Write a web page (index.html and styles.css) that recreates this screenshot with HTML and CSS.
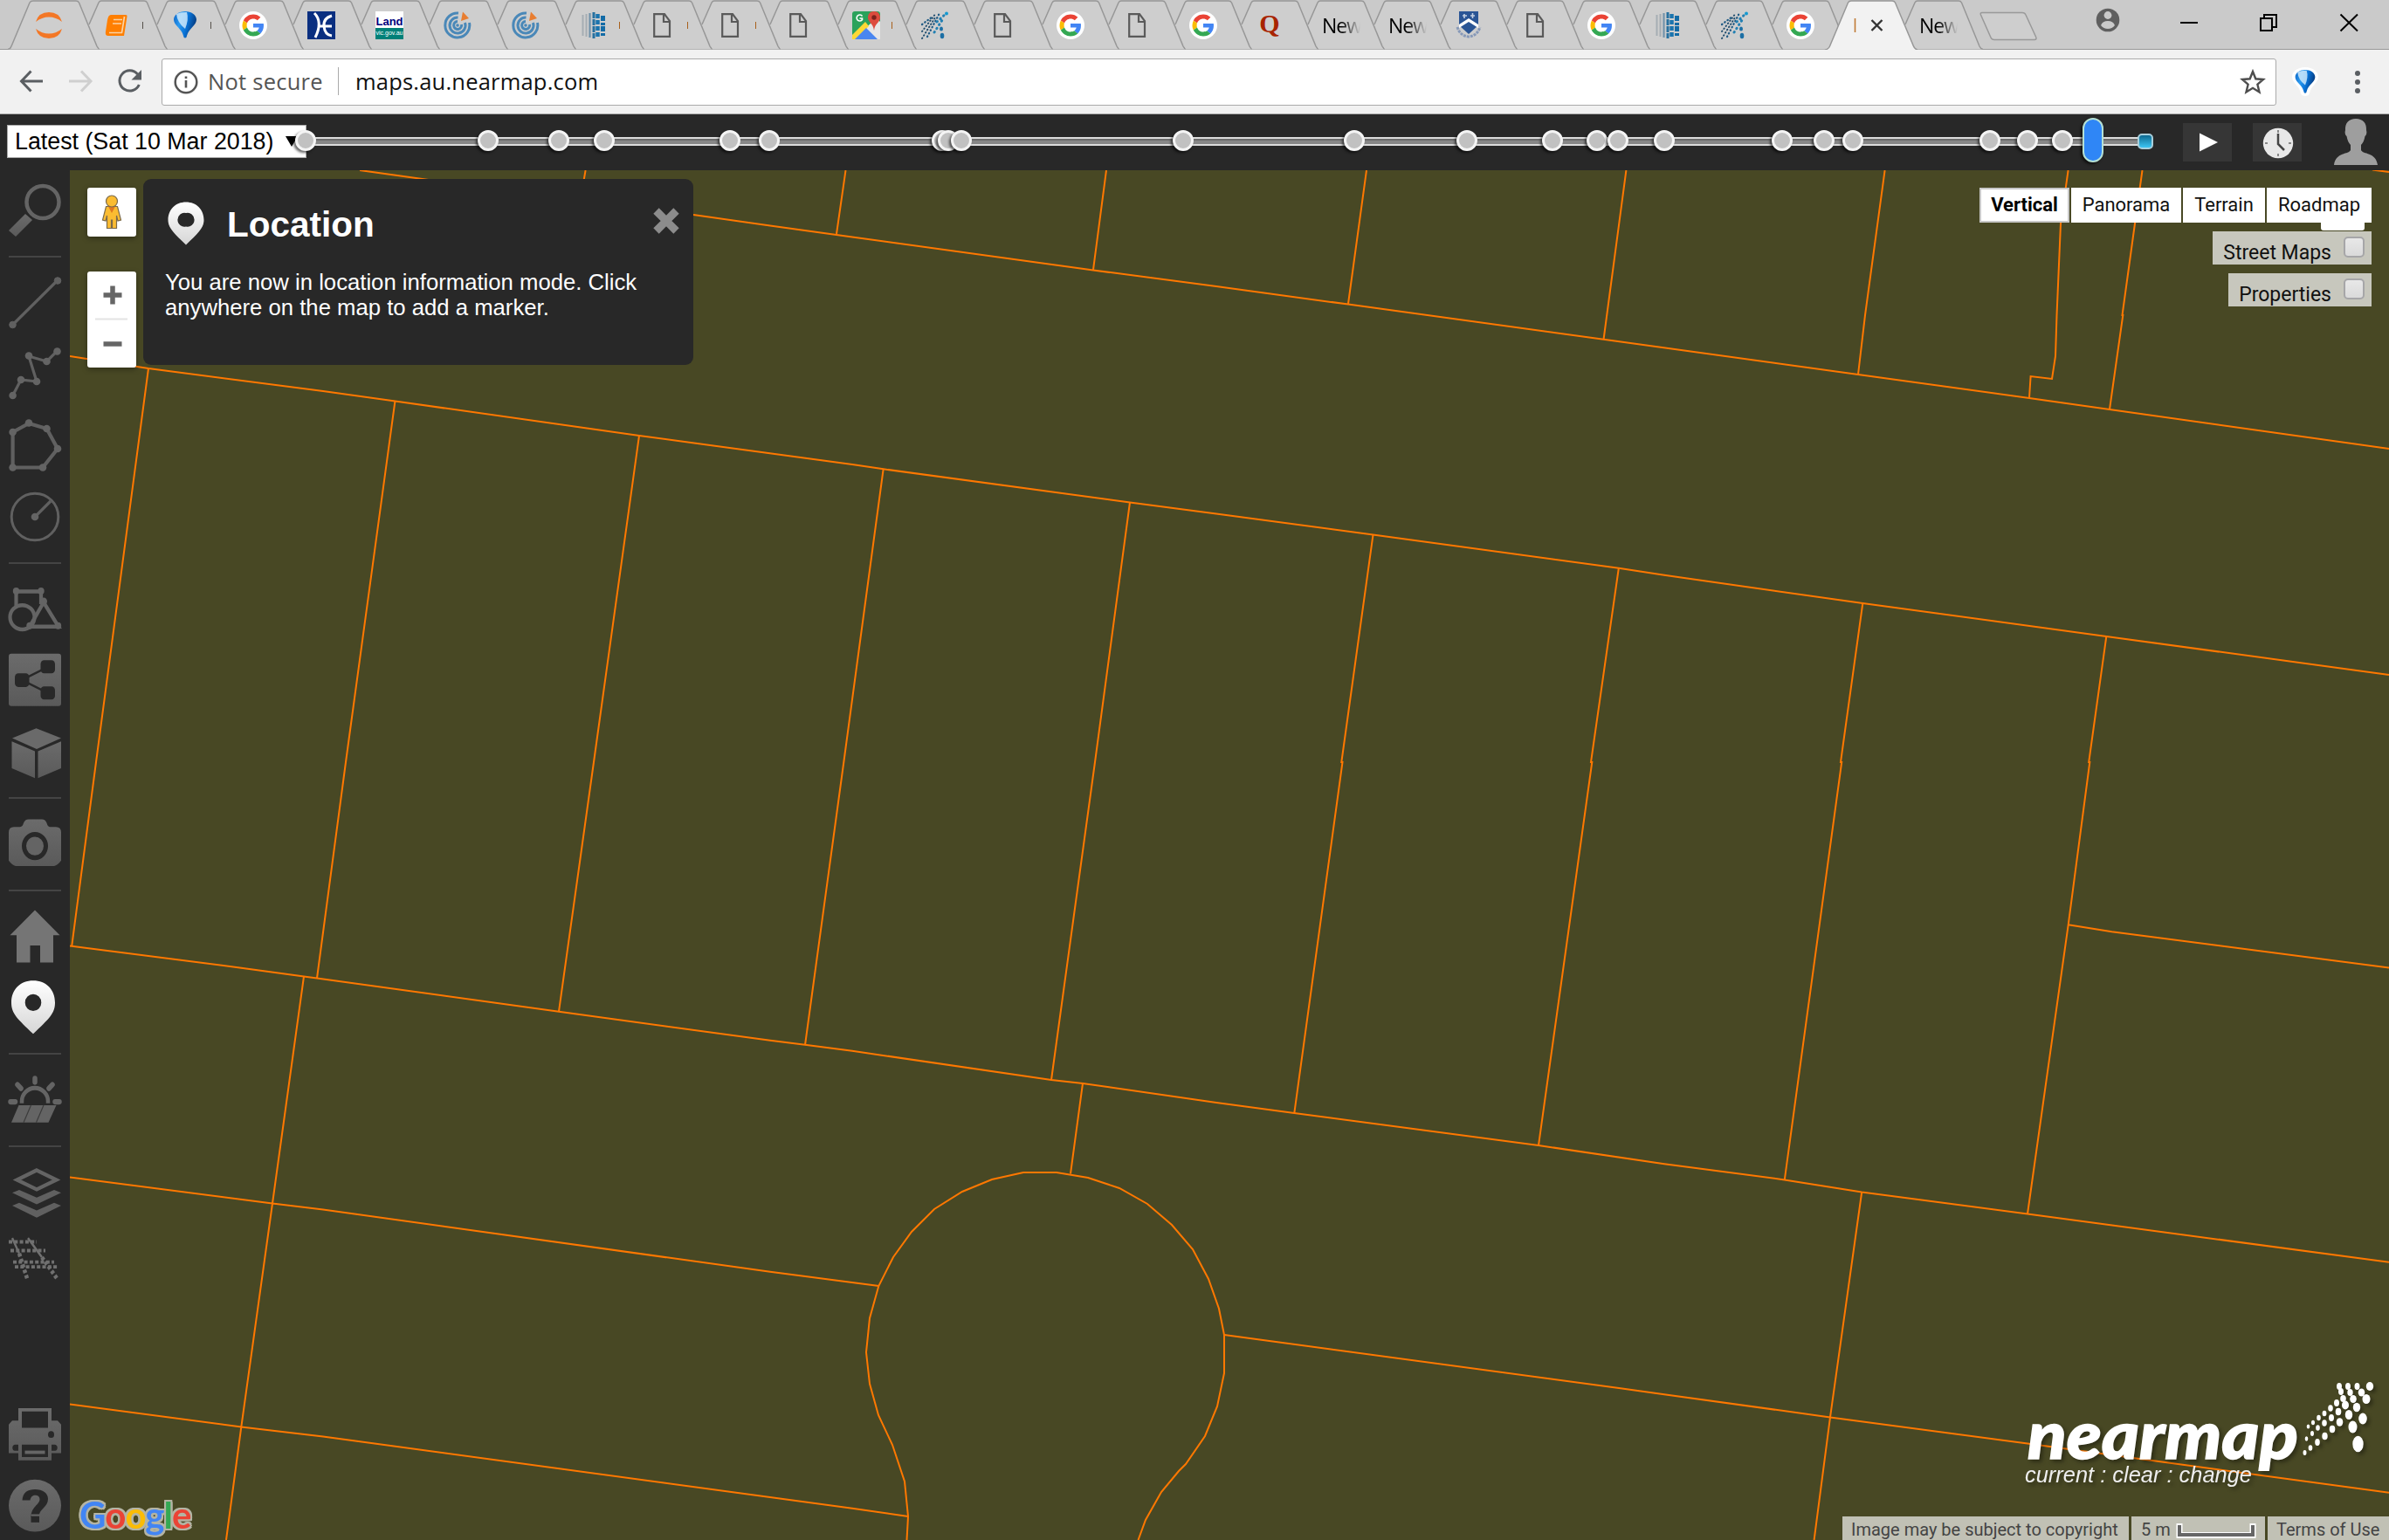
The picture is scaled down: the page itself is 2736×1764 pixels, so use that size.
FILE: index.html
```html
<!DOCTYPE html>
<html lang="en">
<head>
<meta charset="utf-8">
<title>Maps</title>
<link rel="stylesheet" href="styles.css">
</head>
<body>
<svg class="defs" width="0" height="0">
  <defs>
    <linearGradient id="grey" x1="0" y1="0" x2="0" y2="1"><stop offset="0" stop-color="#6b6b6b"/><stop offset="1" stop-color="#5a5a5a"/></linearGradient>
    <linearGradient id="white" x1="0" y1="0" x2="0" y2="1"><stop offset="0" stop-color="#fff"/><stop offset="1" stop-color="#d6d6d6"/></linearGradient>
    <linearGradient id="blue" x1="0" y1="0" x2="1" y2="0.3"><stop offset="0" stop-color="#0b62c4"/><stop offset=".35" stop-color="#2b9af0"/><stop offset=".65" stop-color="#0a74d8"/><stop offset="1" stop-color="#053f85"/></linearGradient>
    <symbol id="tab" viewBox="0 0 122 57"><path d="M28 28L40 2Q40.500 1 42 1H92Q93.500 1 94 2.500L116 54Q117 56 119 56.500H40Z" fill="#cecece"/><path d="M28 28L39 3Q40 1 42 1H91Q93.500 1 94.500 3L115 53Q116.500 56 119 56.500" fill="none" stroke="#979797" stroke-width="1.500"/></symbol>
    <symbol id="tabs" viewBox="0 0 122 57"><path d="M28 28L40 2Q40.500 1 42 1H90Q91.500 1 92 2.500L114 54Q115 56 117 56.500H40Z" fill="#cecece"/><path d="M28 28L39 3Q40 1 42 1H89Q91.500 1 92.500 3L113 53Q114.500 56 117 56.500" fill="none" stroke="#979797" stroke-width="1.500"/></symbol>
    <symbol id="tabfirst" viewBox="0 0 122 57"><path d="M13 56.500Q16 56 17 53L38 3Q39 1 42 1H91Q93.500 1 94.500 3L115 53Q116.500 56 119 56.500" fill="#cecece" stroke="#979797" stroke-width="1.500"/></symbol>
    <symbol id="tabon" viewBox="0 0 122 57"><path d="M12 57Q16 56.500 17.500 53L38.500 3Q39.500 1 42 1H89Q91.500 1 92.500 3L113.500 53Q115 56.500 118 57" fill="#f2f2f2" stroke="#979797" stroke-width="1.500"/></symbol>
    <symbol id="g" viewBox="0 0 32 32"><circle cx="16" cy="16" r="16" fill="#fff"/><g transform="translate(3.500 3.500) scale(.521)"><path fill="#ea4335" d="M24 9.500c3.540 0 6.710 1.220 9.210 3.600l6.850-6.850C35.900 2.380 30.470 0 24 0 14.620 0 6.510 5.380 2.560 13.220l7.980 6.190C12.430 13.720 17.740 9.500 24 9.500z"/><path fill="#4285f4" d="M46.980 24.550c0-1.570-.15-3.090-.38-4.550H24v9.020h12.940c-.58 2.960-2.260 5.480-4.780 7.180l7.730 6c4.510-4.180 7.090-10.360 7.090-17.650z"/><path fill="#fbbc05" d="M10.530 28.590c-.48-1.450-.76-2.990-.76-4.590s.27-3.140.76-4.590l-7.980-6.190C.92 16.460 0 20.120 0 24c0 3.880.92 7.540 2.560 10.780l7.970-6.190z"/><path fill="#34a853" d="M24 48c6.480 0 11.930-2.130 15.890-5.810l-7.730-6c-2.150 1.450-4.920 2.300-8.160 2.300-6.260 0-11.570-4.220-13.470-9.910l-7.980 6.190C6.510 42.620 14.620 48 24 48z"/></g></symbol>
    <symbol id="doc" viewBox="0 0 32 32"><path d="M7.200 3.200H19L25 11V28.800H7.200ZM18 3.200V12H25" fill="none" stroke="#5a5a5a" stroke-width="2.200"/></symbol>
    <symbol id="ring" viewBox="0 0 32 32"><g fill="none" stroke="#4a88b8" stroke-width="3"><path d="M17 2A14 14 0 1 0 29.500 13"/><path d="M16.500 7A9 9 0 1 0 24.500 13"/><path d="M16 11.500A4.500 4.500 0 1 0 20.500 15"/></g><circle cx="16" cy="16" r="1.800" fill="#4a88b8"/><path d="M20 11L22 .5L29 8Z" fill="#e87d30"/></symbol>
    <symbol id="jup" viewBox="0 0 32 32"><path d="M1 12Q4 1 16 1T31 12Q24 6.500 16 6.500T1 12ZM1 20Q4 31 16 31T31 20Q24 25.500 16 25.500T1 20Z" fill="#f37726"/></symbol>
    <symbol id="book" viewBox="0 0 32 32"><path d="M9 4H26Q28 4 27.500 6L24 28H6Q2 28 3 23L5 10Q6 4 9 4Z" fill="#ff7f00"/><path d="M12 9.500H22M11 14H21M7 24.500H21.500L24.500 6" fill="none" stroke="#fbd3a5" stroke-width="1.700"/></symbol>
    <symbol id="balloon" viewBox="0 0 32 32"><path d="M16 0C9 0 3 4 3 9.500C3 16 12 19.500 14 28Q14.300 30.500 16 30.500T18 28C20 19.500 29 16 29 9.500C29 4 23 0 16 0Z" fill="url(#blue)"/><path d="M6 3Q10 .8 18 1Q20.500 9 16 20Q7 13 6 3Z" fill="#d9effc" opacity=".8"/></symbol>
    <symbol id="he" viewBox="0 0 32 32"><rect width="32" height="32" fill="#0a2f80"/><path d="M8 2Q18 12 9 30M28 5Q18 8 19 17Q20 27 28 28M12 17H28" fill="none" stroke="#fff" stroke-width="3"/></symbol>
    <symbol id="bars" viewBox="0 0 32 32"><path d="M3.500 4V28M7.500 3V29" stroke="#a5adb3" stroke-width="2"/><path d="M11.500 2V30" stroke="#7293aa" stroke-width="2.200"/><path d="M16 1V31" stroke="#27709f" stroke-width="3" stroke-dasharray="7 1"/><path d="M20.500 3V29" stroke="#1a74ae" stroke-width="4.500" stroke-dasharray="5 2"/><path d="M26.500 5V28" stroke="#136ba6" stroke-width="5" stroke-dasharray="6 2 3 1"/></symbol>
    <symbol id="near" viewBox="0 0 32 32"><g fill="none" stroke-linecap="round"><path d="M2 31L17 7M2 23L18 2" stroke="#1e4b6c" stroke-width="1.900" stroke-dasharray=".6 3.200"/><path d="M8 29L22 2M2 15L14 6" stroke="#1f5a84" stroke-width="2.200" stroke-dasharray=".6 3.400"/><path d="M16 24L27 7M19 12L30 2" stroke="#2380b3" stroke-width="3" stroke-dasharray=".6 4.500"/></g><ellipse cx="25" cy="28" rx="2.300" ry="3.200" fill="#1c6fa5"/><ellipse cx="24" cy="20" rx="2" ry="2.600" fill="#1c6fa5"/><circle cx="30" cy="2.500" r="2" fill="#159ad0"/></symbol>
    <symbol id="gmap" viewBox="0 0 32 32"><rect width="32" height="32" rx="3" fill="#2aa25b"/><path d="M0 32L28 8L32 12V32Z" fill="#e6e6e6"/><path d="M0 27L15 12L19 17L4 32H0Z" fill="#fdd835"/><path d="M3 32L16 19L29 32Z" fill="#4a86f0"/><path d="M25 0C20 0 18 3.500 18 7C18 13 24 13 25 22C26 13 32 13 32 7C32 3.500 30 0 25 0Z" fill="#dd4b3e"/><circle cx="25" cy="7" r="2.700" fill="#7c231d"/><path d="M11.500 5.500A3.500 3.500 0 1 0 11.500 9.500V8H8.500" fill="none" stroke="#fff" stroke-width="1.600"/></symbol>
    <symbol id="uni" viewBox="0 0 32 32"><path d="M5 0H27V16L16 26L5 16Z" fill="#2a5595"/><path d="M5 15L16 8L27 15V19L16 12L5 19Z" fill="#fff"/><path d="M3 18Q6 28 16 29Q26 28 29 18" fill="none" stroke="#8799b8" stroke-width="3" stroke-dasharray="3 1"/><path d="M9 5H14M18 5H23M11 3V8M20.500 2V8" stroke="#c4d0e2" stroke-width="1.600"/></symbol>
  </defs>
</svg>

<header class="tabstrip">
  <div class="tab"><svg class="shape"><use href="#tabfirst"/></svg><svg class="fav"><use href="#jup"/></svg></div>
  <div class="tab"><svg class="shape"><use href="#tab"/></svg><svg class="fav"><use href="#book"/></svg><i class="sliver"></i></div>
  <div class="tab"><svg class="shape"><use href="#tab"/></svg><svg class="fav"><use href="#balloon"/></svg><i class="sliver"></i></div>
  <div class="tab"><svg class="shape"><use href="#tab"/></svg><svg class="fav"><use href="#g"/></svg></div>
  <div class="tab"><svg class="shape"><use href="#tab"/></svg><svg class="fav"><use href="#he"/></svg></div>
  <div class="tab"><svg class="shape"><use href="#tab"/></svg><span class="fav land"><b>Land</b><em>vic.gov.au</em></span></div>
  <div class="tab"><svg class="shape"><use href="#tab"/></svg><svg class="fav"><use href="#ring"/></svg></div>
  <div class="tab"><svg class="shape"><use href="#tab"/></svg><svg class="fav"><use href="#ring"/></svg></div>
  <div class="tab"><svg class="shape"><use href="#tab"/></svg><svg class="fav"><use href="#bars"/></svg><i class="sliver warm"></i></div>
  <div class="tab"><svg class="shape"><use href="#tab"/></svg><svg class="fav"><use href="#doc"/></svg><i class="sliver warm"></i></div>
  <div class="tab"><svg class="shape"><use href="#tab"/></svg><svg class="fav"><use href="#doc"/></svg><i class="sliver warm"></i></div>
  <div class="tab"><svg class="shape"><use href="#tab"/></svg><svg class="fav"><use href="#doc"/></svg></div>
  <div class="tab"><svg class="shape"><use href="#tab"/></svg><svg class="fav"><use href="#gmap"/></svg><i class="sliver warm"></i></div>
  <div class="tab"><svg class="shape"><use href="#tab"/></svg><svg class="fav"><use href="#near"/></svg></div>
  <div class="tab"><svg class="shape"><use href="#tab"/></svg><svg class="fav"><use href="#doc"/></svg></div>
  <div class="tab narrow"><svg class="shape"><use href="#tabs"/></svg><svg class="fav"><use href="#g"/></svg></div>
  <div class="tab narrow"><svg class="shape"><use href="#tabs"/></svg><svg class="fav"><use href="#doc"/></svg></div>
  <div class="tab narrow"><svg class="shape"><use href="#tabs"/></svg><svg class="fav"><use href="#g"/></svg></div>
  <div class="tab narrow"><svg class="shape"><use href="#tabs"/></svg><span class="fav quora">Q</span></div>
  <div class="tab narrow"><svg class="shape"><use href="#tabs"/></svg><span class="label">New</span></div>
  <div class="tab narrow"><svg class="shape"><use href="#tabs"/></svg><span class="label">New</span></div>
  <div class="tab narrow"><svg class="shape"><use href="#tabs"/></svg><svg class="fav"><use href="#uni"/></svg></div>
  <div class="tab narrow"><svg class="shape"><use href="#tabs"/></svg><svg class="fav"><use href="#doc"/></svg></div>
  <div class="tab narrow"><svg class="shape"><use href="#tabs"/></svg><svg class="fav"><use href="#g"/></svg></div>
  <div class="tab narrow"><svg class="shape"><use href="#tabs"/></svg><svg class="fav"><use href="#bars"/></svg></div>
  <div class="tab narrow"><svg class="shape"><use href="#tabs"/></svg><svg class="fav"><use href="#near"/></svg></div>
  <div class="tab narrow"><svg class="shape"><use href="#tabs"/></svg><svg class="fav"><use href="#g"/></svg></div>
  <div class="tab narrow active"><svg class="shape"><use href="#tabon"/></svg><svg class="closer" viewBox="0 0 32 58"><path d="M2.500 21V37" stroke="#c07a35" stroke-width="1.600"/><path d="M21.500 23L33.500 35M33.500 23L21.500 35" stroke="#333" stroke-width="2.400"/></svg></div>
  <div class="tab narrow"><svg class="shape"><use href="#tabs"/></svg><span class="label">New</span></div>
  <svg class="newtab" viewBox="0 0 68 34"><path d="M3 1.500H49Q52 1.500 53 4L64.500 29Q66 32.500 63 32.500H17Q14 32.500 13 30L1.500 4Q.5 1.500 3 1.500Z" fill="#cecece" stroke="#999" stroke-width="1.500"/></svg>
  <svg class="winctl" viewBox="2390 0 346 57">
    <circle cx="2414" cy="23" r="13.300" fill="#5f5f5f"/><circle cx="2414" cy="17.500" r="4.400" fill="#cacaca"/><path d="M2406 29Q2408 24 2414 24T2422 29Q2419 33 2414 33T2406 29Z" fill="#cacaca"/>
    <g fill="none" stroke="#000" stroke-width="2"><path d="M2497 26H2517"/><path d="M2589 21H2602V35H2589ZM2593 20V17H2607V31H2603"/><path d="M2680.500 16.500L2700 35.500M2700 16.500L2680.500 35.500"/></g>
  </svg>
</header>

<nav class="toolbar">
  <svg class="navicons" viewBox="0 57 185 73">
    <path d="M49 93H25M35.500 81.500L24.500 93L35.500 104.500" fill="none" stroke="#5a5e62" stroke-width="3"/>
    <path d="M79 93H103.500M93 81.500L104 93L93 104.500" fill="none" stroke="#cfcfcf" stroke-width="3"/>
    <path d="M157.500 85A11.600 11.600 0 1 0 159.300 97" fill="none" stroke="#5a5e62" stroke-width="3"/><path d="M162 80V91.500H150.500Z" fill="#5a5e62"/>
  </svg>
  <div class="omnibox">
    <svg class="info" viewBox="0 0 30 30"><circle cx="15" cy="15" r="12.300" fill="none" stroke="#555" stroke-width="2.500"/><path d="M15 13V21.500M15 8.500V11" stroke="#555" stroke-width="2.600"/></svg>
    <span class="insecure">Not secure</span>
    <span class="url">maps.au.nearmap.com</span>
    <svg class="star" viewBox="0 0 30 30"><path d="M15 3L18.300 11.300L27 12L20.400 17.700L22.500 26.500L15 21.800L7.500 26.500L9.600 17.700L3 12L11.700 11.300Z" fill="none" stroke="#4d4d4d" stroke-width="2.400"/></svg>
  </div>
  <svg class="ext" viewBox="0 0 36 36"><path d="M18 1C9 1 3 6 3 12C3 19 12 23 13 31Q14 34 18 34T23 31C24 23 33 19 33 12C33 6 27 1 18 1Z" fill="#fff"/><use href="#balloon" x="4" y="4" width="28" height="28"/></svg>
  <svg class="more" viewBox="0 0 8 30"><g fill="#5a5e62"><circle cx="4" cy="5" r="3"/><circle cx="4" cy="15" r="3"/><circle cx="4" cy="25" r="3"/></g></svg>
</nav>

<section class="timeline">
  <div class="date"><span>Latest (Sat 10 Mar 2018)</span><svg class="caret" viewBox="0 0 14 12"><path d="M0 0H14L7 12Z"/></svg></div>
  <div class="track">
    <i style="left:-1px"></i><i style="left:208px"></i><i style="left:289px"></i><i style="left:341px"></i><i style="left:485px"></i><i style="left:530px"></i>
    <i style="left:728px"></i><i style="left:735px"></i><i style="left:750px"></i><i style="left:1004px"></i><i style="left:1200px"></i><i style="left:1329px"></i><i style="left:1427px"></i>
    <i style="left:1478px"></i><i style="left:1502px"></i><i style="left:1555px"></i><i style="left:1690px"></i><i style="left:1738px"></i><i style="left:1771px"></i>
    <i style="left:1928px"></i><i style="left:1971px"></i><i style="left:2011px"></i>
    <b class="handle"></b><b class="end"></b>
  </div>
  <div class="tbtn"><svg viewBox="0 0 56 44"><path d="M19 11.500L40 22L19 32.500Z" fill="#fff"/></svg></div>
  <div class="tbtn clock"><svg viewBox="0 0 56 44"><circle cx="29" cy="23" r="17.200" fill="#e8e8e8"/><path d="M29 12V24L36 31" fill="none" stroke="#444" stroke-width="2.500"/><path d="M29 8V11M29 35V38M14 23H17M41 23H44" stroke="#888" stroke-width="2"/></svg></div>
  <svg class="user" viewBox="0 0 50 54"><path d="M25 0C17 0 12.500 5 13 13C12 16 13 19 14.500 20C15.500 25 17 28 19 30V36C17 41 2 38 0 53H50C48 38 33 41 31 36V30C33 28 34.500 25 35.500 20C37 19 38 16 37 13C37.500 5 33 0 25 0Z" fill="#9e9e9e"/></svg>
</section>

<main class="work">
  <aside class="tools">
    <svg height="98" viewBox="0 195 80 98"><circle cx="49" cy="231.500" r="18.500" fill="none" stroke="#646464" stroke-width="4.500"/><path d="M29 245L37 252L18 271L10 264Z" fill="url(#grey)"/></svg>
    <hr>
    <svg height="91" viewBox="0 295 80 91"><g fill="#606060" stroke="#606060"><path d="M14.500 372L66 321" stroke-width="3.200"/><circle cx="14.500" cy="372" r="3.800"/><circle cx="66" cy="321.500" r="3.800"/></g></svg>
    <svg height="84" viewBox="0 386 80 84"><path d="M14.600 453L24 435L42 437L33 408L53.500 414L65.500 402" fill="none" stroke="#606060" stroke-width="3.200"/><g fill="#646464"><circle cx="14.600" cy="453" r="4.300"/><circle cx="24" cy="435" r="4.300"/><circle cx="42" cy="437" r="4.300"/><circle cx="33" cy="407.500" r="4.300"/><circle cx="53.500" cy="414" r="4.300"/><circle cx="65.500" cy="402.500" r="4.300"/></g></svg>
    <svg height="81" viewBox="0 470 80 81"><path d="M14.600 495L33 485L53.500 491L66 514L49 535.500H14.600Z" fill="none" stroke="#606060" stroke-width="4.200"/><g fill="#646464"><circle cx="14.600" cy="495" r="4.300"/><circle cx="33" cy="484.500" r="4.300"/><circle cx="53.500" cy="491" r="4.300"/><circle cx="66" cy="514" r="4.300"/><circle cx="49" cy="535.500" r="4.300"/><circle cx="14.600" cy="535.500" r="4.300"/></g></svg>
    <svg height="93" viewBox="0 551 80 93"><circle cx="40" cy="592" r="26.800" fill="none" stroke="#606060" stroke-width="3"/><path d="M40 592L58 574" stroke="#606060" stroke-width="3.200"/><circle cx="40" cy="592" r="4.300" fill="#646464"/></svg>
    <hr>
    <svg height="90" viewBox="0 645 80 84" preserveAspectRatio="none"><g fill="none" stroke="#646464" stroke-width="4.200"><path d="M18.500 692V674.500H47V688"/><ellipse cx="25.500" cy="702" rx="14" ry="13"/><path d="M50 686L34 712H67Z"/></g><g fill="#646464"><circle cx="18.500" cy="674" r="3.700"/><circle cx="47" cy="674" r="3.700"/><circle cx="50" cy="685" r="4"/><circle cx="34" cy="711" r="3.700"/><circle cx="66.500" cy="711" r="3.700"/></g></svg>
    <svg height="85.700" viewBox="0 729 80 80" preserveAspectRatio="none"><rect x="10" y="741" width="60" height="56" rx="3" fill="url(#grey)"/><path d="M25 769L55 755M25 769L55 783" stroke="#282828" stroke-width="2.400" fill="none"/><g fill="#282828"><rect x="17" y="762" width="16.500" height="14.500" rx="4"/><rect x="46.500" y="748" width="16.500" height="14" rx="4"/><rect x="46.500" y="776" width="16.500" height="14" rx="4"/></g></svg>
    <svg height="91.200" viewBox="0 809 80 85" preserveAspectRatio="none"><path d="M41.500 820.500L70 831L42 842.500L14 831Z" fill="#6a6a6a"/><path d="M13.500 834.500L40 845V873.500L13.500 863ZM70 834.500L43.500 845V873.500L70 863Z" fill="url(#grey)"/></svg>
    <hr>
    <svg height="103.900" viewBox="0 896 80 97" preserveAspectRatio="none"><path d="M16 926H23Q26 926 27 922Q28.500 918 33 918H48Q52 918 53.500 922Q54.500 926 57 926H64Q70 926 70 932V962Q66 967 62 968H18Q14 967 10 962V932Q10 926 16 926Z" fill="url(#grey)"/><circle cx="40" cy="946.500" r="12.500" fill="#646464" stroke="#282828" stroke-width="5"/></svg>
    <hr>
    <svg height="92.100" viewBox="0 995 80 86" preserveAspectRatio="none"><path d="M40 1015L68.500 1042H61V1071H46V1053H34.500V1071H19V1042H11.500Z" fill="#757575"/></svg>
    <svg height="92.900" viewBox="0 1081 80 86.600" preserveAspectRatio="none"><path d="M38 1090.500C23 1090.500 13 1100 13 1114C13 1126 20 1131 38 1147.500C56 1131 63 1126 63 1114C63 1100 53 1090.500 38 1090.500ZM38 1105A9.300 9 0 1 1 38 1123A9.300 9 0 1 1 38 1105Z" fill="url(#white)" fill-rule="evenodd"/></svg>
    <hr>
    <svg height="104.200" viewBox="0 1206.200 80 94.900" preserveAspectRatio="none"><path d="M25 1257V1255A15 14 0 0 1 55 1255V1257" fill="none" stroke="#646464" stroke-width="4.500"/><path d="M40 1231V1235M20 1237.500L24 1241.500M60 1237.500L56 1241.500M12 1255.500H17.500M63 1255.500H68" stroke="#646464" stroke-width="5.500" stroke-linecap="round"/><path d="M21.500 1259H64.500L55.500 1277H13Z" fill="#646464"/><path d="M35.500 1259L27 1277M50 1259L41.500 1277" stroke="#3c3c3c" stroke-width="1.200"/></svg>
    <hr>
    <svg height="91.200" viewBox="0 1302.900 80 83.100" preserveAspectRatio="none"><path d="M42 1327L64.500 1337L42 1347L19.500 1337Z" fill="none" stroke="#646464" stroke-width="4"/><path d="M14 1350.500L22 1347.500L42 1355.500L62 1347.500L70 1350.500L42 1362.500ZM14 1364L22 1361L42 1369L62 1361L70 1364L42 1376.500Z" fill="#606060"/></svg>
    <svg height="70.300" viewBox="0 1386 80 64" preserveAspectRatio="none"><g fill="none" stroke="#707070"><path d="M14 1398L22 1414M32 1398L48 1418" stroke-width="2.400"/><path d="M22 1414L31 1440M48 1418L66 1441" stroke-width="4.500" stroke-dasharray="3.500 2.500"/><path d="M10 1402H42M12 1411H52M15 1423H62M17 1428H67" stroke-width="3.600" stroke-dasharray="4 2.300"/></g></svg>
    <svg class="bottom" height="82.400" viewBox="0 1565 80 75" preserveAspectRatio="none"><path d="M21 1575H59V1588H66L70 1592V1622H59V1629.500H21V1622H10V1592L14 1588H21Z" fill="url(#grey)"/><path d="M25 1578.500H55V1595.500H25ZM25 1613H55V1626H25Z" fill="#282828"/><path d="M28.500 1621H51.500" stroke="#666" stroke-width="3.500"/><circle cx="58.500" cy="1602.500" r="3.500" fill="#282828"/><path d="M21 1613H17A3.300 3.300 0 0 0 17 1619.500H21ZM59 1613H63A3.300 3.300 0 0 1 63 1619.500H59Z" fill="#282828"/></svg>
    <svg height="79.800" viewBox="0 1640 80 72.700" preserveAspectRatio="none"><ellipse cx="40" cy="1677" rx="30" ry="27.200" fill="url(#grey)"/><path d="M25.500 1671.500C26 1663 32 1660 40 1660C49 1660 55 1664 55 1670C55 1679 44.500 1680 44.500 1689H35.500C35.500 1678 45.500 1676 45.500 1670.500C45.500 1667.500 43 1666.300 40 1666.300C37 1666.300 35 1668.500 34.500 1671.500Z" fill="#282828"/><rect x="35.500" y="1687.500" width="9.500" height="7" fill="#282828"/><path d="M35.500 1687H45" stroke="#666" stroke-width="2"/></svg>
  </aside>

  <div class="map">
    <svg class="parcels" viewBox="80 195 2656 1569">
      <g fill="none" stroke="#ff7800" stroke-width="2">
        <path d="M412 195L498 207L794 246L882 258.500L976 271.500L1252 309.500L1393 328L1544 348.600L1836.500 388.800L2128 429L2324 456L2416 469L2736 514"/>
        <path d="M670.600 195L668 210M968.500 195L958 268M1267 195L1252 309M1565 195L1544 348M1862.400 195L1836.500 389M2158.600 195L2136 361L2128 429"/>
        <path d="M2368.600 195L2360 256L2355.500 361L2354 408L2350 434L2325.600 431L2324 456M2453.500 195L2445 256L2430.500 361H2431.300L2416 469M2717 194.500L2736 197"/>
        <path d="M80 408L170 422L370 448L452.500 459.500L732 499L976 532L1011.700 537.300L1294 575.500L1393 588.500L1572.500 612.600L1853.800 650.700L1906 658.800L2133.300 691L2412.300 729L2736 773"/>
        <path d="M80 1083.400L274.600 1108.500L348 1118.500L363 1120.500L640 1158.700L882 1191.800L922 1196.800L976 1203.800L1204 1237L1240 1241L1393 1263L1482.300 1275L1762 1312L1906 1333.300L2043.800 1351.400L2132.200 1365.500L2322 1390.500L2736 1445.800"/>
        <path d="M170 422L110 873L82.300 1083M452.500 459L396 873L363 1120.500M732 499L680 873L640 1158.700M1011.700 537L966.300 873L922 1197M1294 575.500L1254 873L1204 1237M1572.500 612.600L1536.300 873H1537.500L1482.300 1275M1853.800 651L1822 873H1823.300L1762 1312M2133.300 691L2108 873H2109.200L2043.800 1351.400M2412.300 729L2392.200 873H2393.300L2368.700 1059.300L2322 1390.500M2368.700 1059.300L2418.600 1067.300L2736 1108.500"/>
        <path d="M348 1118.500L312 1378.500L276.300 1634.500L259 1764M80 1348.400L312 1378.500L370 1385.500L882 1456.800L1006.500 1473M80 1608.400L276.300 1634.500L370 1645.500L976 1727.800L1040 1737M1240 1241L1226 1344.500M2132.200 1365.500L2096 1623.400L2077.600 1764M1402 1529L1856 1590.300L1906 1597.300L2096 1623.400L2322 1653.500L2736 1709.800"/>
        <path d="M1038.500 1764L1040 1737L1036 1697L1022 1655L1006 1621L996 1585L992 1549L996 1510L1006.300 1473L1023 1440L1044 1411L1070 1385L1102 1365L1136 1351L1172 1343H1210L1246 1349L1282 1361L1314 1379L1342 1403L1366 1431L1384 1465L1396 1499L1402 1529V1573L1394 1611L1380 1645L1358 1677L1350 1685L1330 1709L1312 1741L1303.500 1764"/>
      </g>
    </svg>

    <div class="overlay">
      <div class="row top">
        <div class="mapctl">
          <div class="pegman"><svg viewBox="0 0 24 40" width="24" height="40"><path d="M5.500 13.500H18.500L22.500 29L19 30L17.500 24V38.500H12.500V29H11.500V38.500H6.500V24L5 30L1.500 29Z" fill="#fbbc31" stroke="#7b6a4a" stroke-width="1.200"/><path d="M8 13.500H16L12 21Z" fill="#e0791f"/><circle cx="12" cy="7.500" r="6.500" fill="#fbbc31" stroke="#7b6a4a" stroke-width="1.200"/></svg></div>
          <div class="zoom"><svg viewBox="0 0 56 110" width="56" height="110"><path d="M18.500 27H39.500M29 16.500V37.500M18.500 83H39.500" stroke="#666" stroke-width="5.500"/><path d="M9 54.500H46" stroke="#e4e4e4" stroke-width="2"/></svg></div>
        </div>
        <section class="panel">
          <header><svg viewBox="0 0 42 50" width="42" height="50"><path d="M21 .5C9 .5 .5 9 .5 21C.5 30 7 36 21 49.500C35 36 41.500 30 41.500 21C41.500 9 33 .5 21 .5ZM21 13A7.700 8 0 1 1 21 28.500A7.700 8 0 1 1 21 13Z" fill="url(#white)" fill-rule="evenodd"/></svg><h1>Location</h1><svg class="x" viewBox="0 0 32 32" width="32" height="32"><path d="M4.500 4.500L27.500 27.500M27.500 4.500L4.500 27.500" stroke="#8c8c8c" stroke-width="9"/></svg></header>
          <p>You are now in location information mode. Click<br>anywhere on the map to add a marker.</p>
        </section>
        <div class="types">
          <div class="typebar"><span class="on">Vertical</span><span>Panorama</span><span>Terrain</span><span>Roadmap</span></div>
          <div class="stub"></div>
          <div class="check"><span>Street Maps</span><i></i></div>
          <div class="check"><span>Properties</span><i></i></div>
        </div>
      </div>
      <div class="row foot">
        <div class="google"><span class="b">G</span><span class="r">o</span><span class="y">o</span><span class="b">g</span><span class="gr">l</span><span class="r">e</span></div>
        <div class="credit">
          <svg class="brand" viewBox="2310 1575 416 140">
            <text class="word" x="2322" y="1671" textLength="310" lengthAdjust="spacingAndGlyphs">nearmap</text>
            <text class="motto" x="2319" y="1698" textLength="260" lengthAdjust="spacingAndGlyphs">current : clear : change</text>
            <g fill="#fff"><ellipse cx="2679" cy="1588" rx="3" ry="4"/><ellipse cx="2689" cy="1588" rx="3" ry="4"/><ellipse cx="2699.500" cy="1588" rx="3" ry="4"/><ellipse cx="2714" cy="1588" rx="4.200" ry="5"/><ellipse cx="2681" cy="1594" rx="3" ry="4"/><ellipse cx="2691.500" cy="1595" rx="3.200" ry="4"/><ellipse cx="2704.500" cy="1595" rx="3.800" ry="4.500"/><ellipse cx="2683.500" cy="1602" rx="3.300" ry="4"/><ellipse cx="2695" cy="1602.500" rx="3.800" ry="4.500"/><ellipse cx="2710" cy="1602.500" rx="4.500" ry="5.500"/><ellipse cx="2676" cy="1607" rx="3" ry="4"/><ellipse cx="2686" cy="1609.500" rx="4" ry="5"/><ellipse cx="2699" cy="1612" rx="4.200" ry="5.300"/><ellipse cx="2669" cy="1613" rx="2.800" ry="3.800"/><ellipse cx="2678" cy="1617" rx="3.300" ry="4.300"/><ellipse cx="2690" cy="1620.500" rx="4.200" ry="5.500"/><ellipse cx="2706" cy="1625" rx="4.800" ry="6.500"/><ellipse cx="2662" cy="1619" rx="2.400" ry="3.300"/><ellipse cx="2670" cy="1624" rx="3" ry="4"/><ellipse cx="2679.500" cy="1629" rx="3.800" ry="4.800"/><ellipse cx="2694.500" cy="1634.500" rx="5" ry="7"/><ellipse cx="2655.500" cy="1624" rx="2.300" ry="3.200"/><ellipse cx="2662" cy="1630" rx="2.800" ry="3.800"/><ellipse cx="2671" cy="1637" rx="3.300" ry="4.200"/><ellipse cx="2649" cy="1629.500" rx="2" ry="2.800"/><ellipse cx="2654.500" cy="1635.500" rx="2.300" ry="3.300"/><ellipse cx="2662.500" cy="1645" rx="3.200" ry="4.300"/><ellipse cx="2643.500" cy="1634" rx="1.800" ry="2.500"/><ellipse cx="2648" cy="1642" rx="2" ry="3"/><ellipse cx="2654" cy="1652" rx="2.800" ry="4"/><ellipse cx="2641.500" cy="1648" rx="1.800" ry="2.700"/><ellipse cx="2646" cy="1658.500" rx="2.300" ry="3.300"/><ellipse cx="2639.500" cy="1664" rx="2" ry="3"/><ellipse cx="2700.500" cy="1654" rx="6.200" ry="9.300"/></g>
          </svg>
          <div class="legal"><span class="c1">Image may be subject to copyright</span><span class="c2">5 m<svg viewBox="0 0 92 17" width="92" height="17"><path d="M4 0V13.500H88V0" fill="none" stroke="#fff" stroke-width="7"/><path d="M4 2V13H88V2" fill="none" stroke="#666" stroke-width="4"/></svg></span><span class="c3">Terms of Use</span></div>
        </div>
      </div>
    </div>
  </div>
</main>
</body>
</html>
```
FILE: styles.css
```css
* { box-sizing: border-box; }
body { margin: 0; width: 2736px; height: 1764px; overflow: hidden; display: flex; flex-direction: column; background: #282828; font-family: "Liberation Sans", Arial, sans-serif; }
svg { display: block; flex: none; }
.defs { position: absolute; }

.tabstrip { flex: none; height: 57px; display: flex; padding-left: 13px; background: #cacaca; border-bottom: 1.5px solid #979797; }
.tab { position: relative; flex: none; width: 78px; height: 57px; padding: 13px 0 0 27px; }
.narrow { width: 76px; }
.shape { position: absolute; left: -17px; top: 0; width: 122px; height: 57px; }
.active { z-index: 2; padding: 0 0 0 27px; }
.closer { position: relative; width: 32px; height: 58px; overflow: visible; }
.fav { position: relative; display: block; width: 32px; height: 32px; }
.land { overflow: hidden; background: linear-gradient(#fff 58%, #008078 58%); text-align: center; }
.land b { display: block; font: bold 13px/21px "Liberation Sans", sans-serif; color: #00007c; margin-top: 1px; }
.land em { display: block; font: normal 7px/6px "Liberation Sans", sans-serif; color: #fff; }
.quora { font: bold 30px/28px "Liberation Serif", serif; color: #a82400; text-align: center; }
.sliver { position: absolute; left: 72px; top: 25px; width: 1px; height: 8px; background: #55504a; }
.warm { background: #a8601c; }
.label { position: relative; display: block; width: 44px; overflow: hidden; font: 23px/32px "Open Sans", sans-serif; letter-spacing: -1px; color: #000; -webkit-mask-image: linear-gradient(90deg, #000 50%, transparent); mask-image: linear-gradient(90deg, #000 50%, transparent); }
.newtab { width: 68px; height: 34px; margin: 13px 0 0 20px; }
.winctl { width: 346px; height: 57px; margin-left: auto; }

.toolbar { flex: none; height: 74px; display: flex; align-items: center; background: #f1f1f1; border-bottom: 1.5px solid #aaa; }
.navicons { width: 185px; height: 73px; }
.omnibox { width: 2422px; height: 54px; display: flex; align-items: center; background: #fff; border: 1.5px solid #aaa; border-radius: 3px; padding: 0 11px 0 12px; font-family: "Open Sans", sans-serif; font-size: 25.500px; line-height: 32px; }
.info { width: 30px; height: 30px; }
.insecure { width: 150px; margin: 0 0 1px 10px; color: #555; border-right: 1.5px solid #aaa; letter-spacing: .25px; white-space: nowrap; }
.url { margin: 0 0 2px 19px; color: #111; letter-spacing: .2px; }
.star { width: 30px; height: 30px; margin-left: auto; }
.ext { width: 36px; height: 36px; margin-left: 15px; }
.more { width: 8px; height: 30px; margin-left: 38px; }

.timeline { flex: none; height: 64px; display: flex; background: #282828; }
.date { width: 343px; height: 38px; margin: 12px 0 0 8px; padding-left: 8px; background: #fff; border: 1px solid #a9a9a9; display: flex; align-items: center; font-size: 26.800px; color: #000; white-space: nowrap; }
.date span { width: 310px; }
.caret { width: 14px; height: 12px; }
.track { position: relative; width: 2106px; height: 10px; margin-top: 26px; background: linear-gradient(#dcdcdc 0 20%, #6c6c6c 20% 40%, #878787 40% 80%, #dcdcdc 80%); }
.track i { position: absolute; top: -8px; width: 24px; height: 24px; margin-left: -12px; border-radius: 50%; background: #c1c1c1; border: 3px solid #f4f4f4; box-shadow: -2px 2px 3px rgba(0,0,0,.6); }
.handle { position: absolute; left: 2034px; top: -22px; width: 24px; height: 51px; border-radius: 12px; background: #2f86f6; border: 2.500px solid #b5e0d4; box-shadow: -2px 2px 3px rgba(0,0,0,.6); }
.end { position: absolute; left: 2097px; top: -4px; width: 18px; height: 18px; border-radius: 5px; background: linear-gradient(#0e6a90, #3cc6f4); border: 2px solid #a8cfdc; }
.tbtn { width: 56px; height: 44px; margin: 10px 0 0 43px; background: #363636; }
.clock { margin-left: 24px; }
.user { width: 50px; height: 54px; margin: 5px 0 0 37px; }

.work { flex: 1; display: flex; min-height: 0; }
.tools { flex: none; width: 80px; display: flex; flex-direction: column; background: #282828; }
.tools svg { width: 80px; }
.tools hr { flex: none; width: 60px; height: 2px; margin: 0 10px; border: 0; background: #444; }
.tools .bottom { margin-top: auto; }

.map { position: relative; flex: 1; background: #484824; overflow: hidden; }
.parcels { position: absolute; left: 0; top: 0; width: 2656px; height: 1569px; }
.overlay { position: absolute; inset: 0; display: flex; flex-direction: column; justify-content: space-between; }
.row { display: flex; }
.mapctl { padding: 20px 0 0 20px; }
.pegman, .zoom { width: 56px; background: #fff; border-radius: 3px; box-shadow: 0 2px 6px rgba(0,0,0,.35); }
.pegman { height: 56px; display: flex; justify-content: center; align-items: center; margin-bottom: 40px; }
.zoom { height: 110px; }
.panel { width: 630px; height: 213px; margin: 10px 0 0 8px; padding: 26px 15px 0 28px; background: #282828; border-radius: 9px; color: #fff; }
.panel header { display: flex; height: 50px; }
.panel h1 { margin: 3px 0 0 26px; font-size: 40.500px; line-height: 46px; }
.panel .x { margin: 6px 0 0 auto; }
.panel p { margin: 28px 0 0 -3px; font-size: 25.700px; line-height: 29px; white-space: nowrap; }
.types { margin: 20px 20px 0 auto; display: flex; flex-direction: column; align-items: flex-end; font-family: Roboto, sans-serif; color: #111; }
.typebar { display: flex; gap: 2px; }
.typebar span { height: 40px; background: #fff; text-align: center; font-size: 22px; line-height: 39px; width: 126px; }
.typebar .on { width: 103px; border: 2px solid #c8c8c8; line-height: 35px; font-weight: 700; color: #000; }
.typebar span:nth-child(3) { width: 94px; }
.typebar span:nth-child(4) { width: 120px; }
.stub { width: 50px; height: 9px; margin: 0 8px 1px 0; background: #fff; border-radius: 0 0 3px 3px; }
.check { height: 38px; margin-bottom: 10px; padding: 5px 8px 0 12px; display: flex; background: #c7c7bd; font-size: 23px; line-height: 39px; }
.check i { width: 24px; height: 24px; margin: 1px 0 0 14px; border: 2px solid #a6a6a8; border-radius: 5px; background: linear-gradient(#e8e8e8, #dadada); }
.foot { align-items: flex-end; }
.google { margin: 0 0 0 11px; height: 76px; font: 700 42px/94px Lato, sans-serif; letter-spacing: -1px; filter: drop-shadow(2px 0 0 #b4b4a4) drop-shadow(-2px 0 0 #b4b4a4) drop-shadow(0 2px 0 #b4b4a4) drop-shadow(0 -2px 0 #b4b4a4); }
.b { color: #4285f4; } .r { color: #ea4335; } .y { color: #fbbc05; } .gr { color: #34a853; }
.credit { margin-left: auto; display: flex; flex-direction: column; align-items: flex-end; }
.brand { width: 416px; height: 140px; margin: 0 10px 22px 0; filter: drop-shadow(3px 3px 2px rgba(0,0,0,.35)); }
.word { font: italic 900 77px Lato, sans-serif; fill: #fff; stroke: #fff; stroke-width: 1.5px; }
.motto { font: italic 400 26px "Liberation Sans", sans-serif; fill: #eee; }
.legal { display: flex; gap: 3px; font: 20px/34px Roboto, sans-serif; color: #444; }
.legal span { height: 27px; background: #c1c1b5; white-space: nowrap; overflow: hidden; line-height: 31px; }
.c1 { width: 328px; padding-left: 10px; }
.c2 { width: 153px; padding-left: 11px; display: flex; }
.c2 svg { margin: 8px 0 0 6px; }
.c3 { width: 139px; padding-left: 10px; }
```
